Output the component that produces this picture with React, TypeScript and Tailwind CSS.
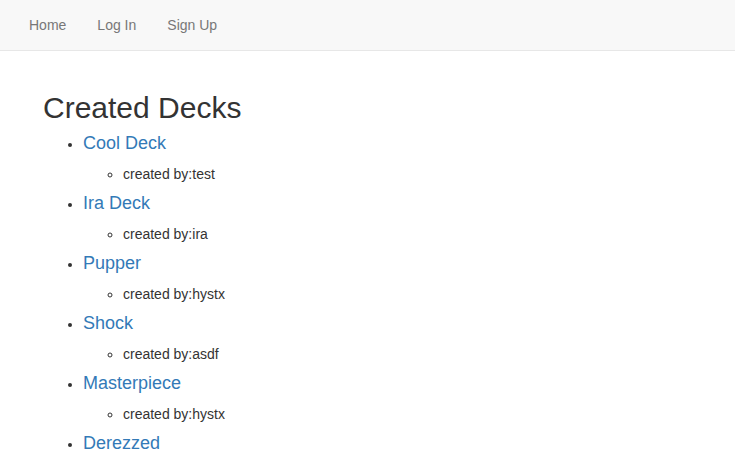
const decks = [
  { name: "Cool Deck", author: "test" },
  { name: "Ira Deck", author: "ira" },
  { name: "Pupper", author: "hystx" },
  { name: "Shock", author: "asdf" },
  { name: "Masterpiece", author: "hystx" },
  { name: "Derezzed", author: "hystx" },
];

const App = () => {
  return (
    <div className="min-h-screen bg-white font-['Liberation_Sans',Arial,sans-serif] text-[14px] leading-[20px] text-[#333]">
      <nav className="h-[51px] border-b border-[#e7e7e7] bg-[#f8f8f8]">
        <ul className="flex pl-[14px]">
          <li>
            <a href="#" className="block px-[15px] py-[15px] text-[#777]">
              Home
            </a>
          </li>
          <li>
            <a href="#" className="block pl-[16px] pr-[16px] py-[15px] text-[#777]">
              Log In
            </a>
          </li>
          <li>
            <a href="#" className="block px-[15px] py-[15px] text-[#777]">
              Sign Up
            </a>
          </li>
        </ul>
      </nav>

      <div className="pl-[43px] pt-[40px]">
        <h2 className="text-[30px] font-medium leading-[1.1]">
          Created Decks
        </h2>
        <ul className="flex list-disc flex-col gap-[9px] pl-[40px] pt-[9px]">
          {decks.map((deck) => (
            <li key={deck.name}>
              <h4 className="mb-[11px] text-[18px] font-medium leading-[20px]">
                <a href="#" className="text-[#337ab7]">
                  {deck.name}
                </a>
              </h4>
              <ul className="list-[circle] pl-[40px]">
                <li>created by:{deck.author}</li>
              </ul>
            </li>
          ))}
        </ul>
      </div>
    </div>
  );
};

export default App;
